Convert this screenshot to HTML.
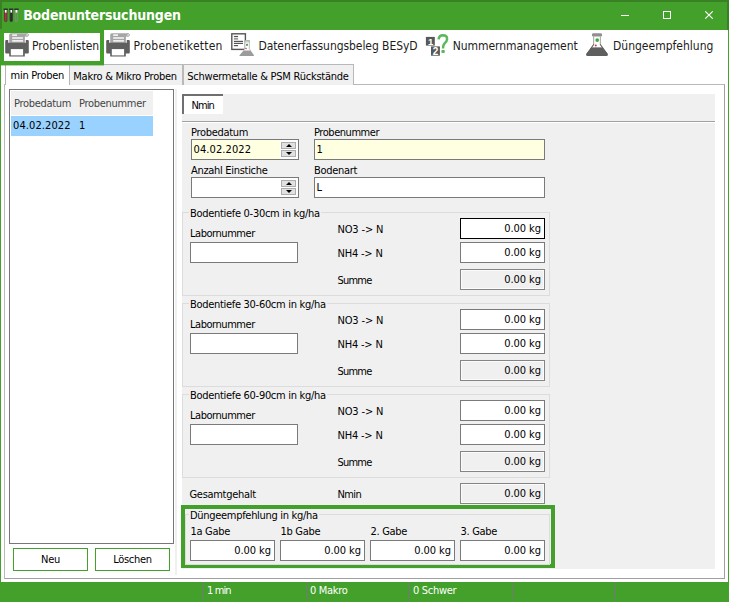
<!DOCTYPE html>
<html lang="de">
<head>
<meta charset="utf-8">
<title>Bodenuntersuchungen</title>
<style>
:root{--g:#43a02a;--gd:#3a8024;--f:"DejaVu Sans Condensed","Liberation Sans",sans-serif;}
*{box-sizing:border-box;margin:0;padding:0}
html,body{width:729px;height:602px;overflow:hidden;background:#fff}
body{position:relative;font-family:var(--f);font-size:11px;letter-spacing:-0.3px;color:#000;line-height:13px}
#win{position:absolute;left:0;top:0;width:729px;height:602px;background:#fff;overflow:hidden}
#win div,#win span,#win svg{position:absolute;white-space:nowrap}
/* title bar */
#title{left:0;top:0;width:729px;height:30px;background:var(--g);border:2px solid var(--gd);border-bottom:none}
#title .cap{left:21.2px;top:4px;font-size:14px;font-weight:bold;color:#fff;line-height:18px;letter-spacing:-0.17px}
/* window frame */
#bl{left:0;top:30px;width:1px;height:572px;background:var(--g)}
#br{left:728px;top:30px;width:1px;height:572px;background:var(--g)}
#status{left:0;top:582px;width:729px;height:20px;background:var(--g);color:#fff}
#status span{top:2px;color:#fff}
#status i{position:absolute;top:0;width:1px;height:18px;background:#767a74}
/* toolbar */
.tb{top:39px;font-size:12px;line-height:15px;letter-spacing:-0.12px;color:#1c1c1c}
#hl{left:0;top:29px;width:104px;height:36px;border:4px solid var(--g);background:#fff;z-index:3;box-shadow:0 1px 0 rgba(67,160,42,.4)}
.ic,.tb{z-index:4}
/* tabs */
.tab{top:64px;height:21px;border:1px solid #b9b9b9;border-bottom:none;background:#f0f0f0}
.tab span{top:5px;left:3.3px;letter-spacing:-0.25px}
.tab.act{top:65px;height:20px;background:#fff;border-color:#b4b4b4;border-top:none}
.tab.act span{top:4px;left:4.5px}
#panel{left:4px;top:84px;width:721px;height:495px;border:1px solid #b9b9b9;border-right:1px solid #a0a0a0;border-bottom:1px solid #a0a0a0;background:#fff}
#split{left:175px;top:89px;width:2px;height:486px;background:#f0f0f0}
/* list */
#list{left:9px;top:89px;width:165px;height:455px;border:1px solid #777;background:#fff}
#lhead{left:11px;top:91px;width:142px;height:24px;background:#f0f0f0}
#lsel{left:11px;top:116px;width:142px;height:20px;background:#99d1ff}
.btn{top:548px;height:23px;border:1px solid var(--g);background:#fff;text-align:center;line-height:21px}
/* form */
#gray{left:182px;top:94px;width:533px;height:475px;background:#f0f0f0}
#ntab{left:182px;top:94px;width:41px;height:20px;background:#fff;border-left:2px solid #6f6f6f;border-top:2px solid #6f6f6f}
#ntab span{left:7.5px;top:3px;letter-spacing:-0.95px}
#nline{left:182px;top:121px;width:533px;height:2px;background:#fff;border-top:1px solid #a0a0a0}
.t{line-height:13px}
.inp{border:1px solid #7a7a7a;background:#fff;line-height:13px;padding:3px 0 0 1.5px}
.inp.y{background:#ffffe1}
.inp.r{text-align:right;padding-right:3px;letter-spacing:-0.05px}
.inp.d{background:#f0f0f0;border-color:#858585;box-shadow:inset 0 0 0 1px #fbfbfb}
.inp.f{border-color:#000}
.spw{width:18px;height:19px;background:#fff}
.spb{width:15px;height:7px;background:#e1e1e1;border:1px solid #adadad}
.grp{border:1px solid #dcdcdc}
.gl{background:#f0f0f0;padding:0 1px}
#hl2{left:181px;top:505px;width:374px;height:63px;border:4px solid var(--g)}
</style>
</head>
<body>
<div id="win">
  <div id="title"><span class="cap">Bodenuntersuchungen</span></div>
  <div id="panel"></div>
  <div id="hl"></div>
  <svg class="ic" style="left:1px;top:8px" width="20" height="16" viewBox="0 0 20 16">
    <path d="M3.5 1.6H6V12.4Q6 13.6 4.75 13.6Q3.5 13.6 3.5 12.4Z" fill="#c8283c" stroke="#3c3c3c" stroke-width="0.8"/>
    <rect x="3.9" y="2" width="1.7" height="2.6" fill="#fff"/>
    <rect x="2.6" y="0.5" width="4.2" height="1.5" fill="#2e2e2e"/>
    <path d="M9 1.6H11.5V12.4Q11.5 13.6 10.25 13.6Q9 13.6 9 12.4Z" fill="#2b2b2b" stroke="#3c3c3c" stroke-width="0.8"/>
    <rect x="9.4" y="2" width="1.7" height="2.6" fill="#fff"/>
    <rect x="8.1" y="0.5" width="4.2" height="1.5" fill="#2e2e2e"/>
    <path d="M14.2 1.6H16.7V12.4Q16.7 13.6 15.45 13.6Q14.2 13.6 14.2 12.4Z" fill="#4aa338" stroke="#8a8f86" stroke-width="0.8"/>
    <rect x="14.6" y="2" width="1.7" height="2.6" fill="#fff"/>
    <rect x="13.3" y="0.5" width="4.4" height="1.5" fill="#2e2e2e"/>
  </svg>
  <svg class="ic" style="left:618px;top:8px" width="100" height="14" viewBox="0 0 100 14">
    <rect x="3" y="7" width="8" height="1" fill="#fff"/>
    <rect x="45.5" y="3.5" width="7" height="7" fill="none" stroke="#fff" stroke-width="1"/>
    <path d="M87.3 3.3L94.7 10.7M94.7 3.3L87.3 10.7" stroke="#fff" stroke-width="1.2" fill="none"/>
  </svg>
  <svg class="ic" style="left:4.5px;top:33.2px" width="24" height="24" viewBox="0 0 24 24">
    <path d="M4.2 9.8V1.6Q4.2 .2 5.6 .2H22" fill="none"/>
    <path d="M4.2 10V1.8Q4.2 .2 5.8 .2H22.2V3.6H19.9V10Z" fill="#a6a6a6"/>
    <circle cx="22.1" cy="2" r="1.3" fill="#fff" stroke="#a6a6a6" stroke-width="1"/>
    <rect x="7.2" y="1.4" width="4.8" height="1.4" fill="#fff"/>
    <rect x="7.2" y="4.3" width="10.8" height="1.4" fill="#fff"/>
    <rect x="7.2" y="7.2" width="10.8" height="1.4" fill="#fff"/>
    <path d="M1.2 7H3.2V9.8H20.8V7H22.8Q23.8 7 23.8 8V19.4Q23.8 20.4 22.8 20.4H19.8V23.6H4.2V20.4H1.2Q.2 20.4 .2 19.4V8Q.2 7 1.2 7Z" fill="#5f5f5f"/>
    <rect x="5.8" y="16.1" width="12.3" height="6.3" fill="#fff"/>
  </svg>
  <svg class="ic" style="left:106px;top:33.2px" width="24" height="24" viewBox="0 0 24 24">
    <path d="M4.2 9.8V1.6Q4.2 .2 5.6 .2H22" fill="none"/>
    <path d="M4.2 10V1.8Q4.2 .2 5.8 .2H22.2V3.6H19.9V10Z" fill="#a6a6a6"/>
    <circle cx="22.1" cy="2" r="1.3" fill="#fff" stroke="#a6a6a6" stroke-width="1"/>
    <rect x="7.2" y="1.4" width="4.8" height="1.4" fill="#fff"/>
    <rect x="7.2" y="4.3" width="10.8" height="1.4" fill="#fff"/>
    <rect x="7.2" y="7.2" width="10.8" height="1.4" fill="#fff"/>
    <path d="M1.2 7H3.2V9.8H20.8V7H22.8Q23.8 7 23.8 8V19.4Q23.8 20.4 22.8 20.4H19.8V23.6H4.2V20.4H1.2Q.2 20.4 .2 19.4V8Q.2 7 1.2 7Z" fill="#5f5f5f"/>
    <rect x="5.8" y="16.1" width="12.3" height="6.3" fill="#fff"/>
  </svg>
  <svg class="ic" style="left:230px;top:32px" width="26" height="26" viewBox="0 0 26 26">
    <rect x="1.8" y="1.8" width="13.6" height="15.6" fill="#fff" stroke="#555" stroke-width="1.4"/>
    <rect x="3.9" y="3.9" width="4.2" height="1.2" fill="#555"/>
    <rect x="3.9" y="5.9" width="4.2" height="1.8" fill="#9a9a9a"/>
    <rect x="3.9" y="8.8" width="9.1" height="1.2" fill="#555"/>
    <rect x="3.9" y="10.8" width="9.1" height="1.2" fill="#555"/>
    <rect x="3.9" y="13" width="4.2" height="1.2" fill="#555"/>
    <path d="M14.9 9.3V16.6L9.6 23.2Q9.2 24 10.2 24H23.2Q24.2 24 23.8 23.2L19.3 16.6V9.3Z" fill="#fff"/>
    <path d="M14.9 9.3V16.8L13.4 18.6" fill="none" stroke="#b5b5b5" stroke-width="0.9"/>
    <path d="M19.3 9.3V16.8L20.6 18.6" fill="none" stroke="#b5b5b5" stroke-width="0.9"/>
    <rect x="14.5" y="8.1" width="5.2" height="2.2" fill="#a9a9a9"/>
    <rect x="15.4" y="8.9" width="3.4" height="0.7" fill="#e6e6e6"/>
    <path d="M13.6 18.4H20.6L24 23.2Q24.4 24 23.4 24H10Q9 24 9.5 23.2Z" fill="#9b9b9b"/>
    <rect x="16" y="11.8" width="2" height="2" fill="#4cae4c"/>
    <rect x="15.3" y="15.9" width="1.4" height="1.2" fill="#e0344c"/>
  </svg>
  <svg class="ic" style="left:424px;top:32px" width="26" height="26" viewBox="0 0 26 26">
    <rect x="1.9" y="4.9" width="8.9" height="8.7" fill="#585858"/>
    <rect x="7" y="14.4" width="8.9" height="9.3" fill="#585858"/>
    <text x="6.6" y="12.6" style="font-family:'Liberation Sans',sans-serif" font-weight="bold" font-size="9.5" fill="#fff" text-anchor="middle" letter-spacing="0">1</text>
    <text x="11.5" y="23" style="font-family:'Liberation Sans',sans-serif" font-weight="bold" font-size="10" fill="#fff" text-anchor="middle" letter-spacing="0">2</text>
    <path d="M14.6 7.4Q15 3.3 19 3.3Q23.2 3.4 23.1 7Q23 9.3 20.6 11.4Q19 13 19 16.4" fill="none" stroke="#5cb85c" stroke-width="2.5" stroke-linecap="butt"/>
    <rect x="17.4" y="18.1" width="3.4" height="3" rx="0.8" fill="#5cb85c"/>
  </svg>
  <svg class="ic" style="left:584px;top:32px" width="26" height="26" viewBox="0 0 26 26">
    <path d="M9.6 4.5V12L2.6 21.6Q1.6 24 3.8 24H22.2Q24.4 24 23.4 21.6L16.4 12V4.5Z" fill="#fff"/>
    <path d="M9.6 4.5V12.4" stroke="#b0b0b0" stroke-width="1.2" fill="none"/>
    <path d="M16.4 4.5V12.4" stroke="#b0b0b0" stroke-width="1.2" fill="none"/>
    <path d="M9.4 12L2.6 21.6Q1.6 24 3.8 24H22.2Q24.4 24 23.4 21.6L16.6 12L15.6 12.5L18.1 15.8H7.9L10.4 12.5Z" fill="#5f5f5f"/>
    <path d="M7.5 15.6H18.5L23.4 21.6Q24.4 24 22.2 24H3.8Q1.6 24 2.6 21.6Z" fill="#5f5f5f"/>
    <rect x="8" y="1.2" width="10" height="3.4" rx="1.3" fill="#8f8f8f"/>
    <circle cx="13.2" cy="8.1" r="1.9" fill="#45a845"/>
    <circle cx="11.8" cy="13.4" r="1" fill="#dc3248"/>
  </svg>
  <span class="tb" style="left:32px;letter-spacing:0.04px">Probenlisten</span>
  <span class="tb" style="left:133.6px;letter-spacing:0.22px">Probenetiketten</span>
  <span class="tb" style="left:258.4px;letter-spacing:-0.06px">Datenerfassungsbeleg BESyD</span>
  <span class="tb" style="left:452.8px;letter-spacing:-0.07px">Nummernmanagement</span>
  <span class="tb" style="left:613px;letter-spacing:0px">Düngeempfehlung</span>

  <div class="tab" style="left:69px;width:114px"><span>Makro &amp; Mikro Proben</span></div>
  <div class="tab" style="left:183px;width:171px"><span>Schwermetalle &amp; PSM Rückstände</span></div>
  <div class="tab act" style="left:5px;width:65px"><span>min Proben</span></div>

  <div id="split"></div>
  <div id="list"></div>
  <div id="lhead"></div>
  <div id="lsel"></div>
  <span style="left:14px;top:97px;color:#444">Probedatum</span>
  <span style="left:79px;top:97px;color:#444">Probenummer</span>
  <span style="left:13px;top:119px;letter-spacing:0.1px">04.02.2022</span>
  <span style="left:79px;top:119px">1</span>
  <div class="btn" style="left:13px;width:75px">Neu</div>
  <div class="btn" style="left:95px;width:75px">Löschen</div>

  <div id="gray"></div>
  <div id="ntab"><span>Nmin</span></div>
  <div id="nline"></div>
  <span class="t" style="left:191px;top:126px;">Probedatum</span>
  <span class="t" style="left:314px;top:126px;letter-spacing:-0.45px;">Probenummer</span>
  <div class="inp y" style="left:191px;top:139px;width:108px;height:21px;letter-spacing:0.1px;">04.02.2022</div>
  <div class="spw" style="left:280px;top:140px"></div>
  <div class="spb" style="left:281px;top:142px"><svg width="6" height="3" viewBox="0 0 6 3" style="left:3.5px;top:1px"><path d="M0 3 L3 0 L6 3 Z" fill="#000"/></svg></div>
  <div class="spb" style="left:281px;top:150px"><svg width="6" height="3" viewBox="0 0 6 3" style="left:3.5px;top:1px"><path d="M0 0 L6 0 L3 3 Z" fill="#000"/></svg></div>
  <div class="inp y" style="left:314px;top:139px;width:231px;height:21px;">1</div>
  <span class="t" style="left:191px;top:164px;">Anzahl Einstiche</span>
  <span class="t" style="left:314px;top:164px;">Bodenart</span>
  <div class="inp " style="left:191px;top:177px;width:108px;height:21px;"></div>
  <div class="spw" style="left:280px;top:178px"></div>
  <div class="spb" style="left:281px;top:180px"><svg width="6" height="3" viewBox="0 0 6 3" style="left:3.5px;top:1px"><path d="M0 3 L3 0 L6 3 Z" fill="#000"/></svg></div>
  <div class="spb" style="left:281px;top:188px"><svg width="6" height="3" viewBox="0 0 6 3" style="left:3.5px;top:1px"><path d="M0 0 L6 0 L3 3 Z" fill="#000"/></svg></div>
  <div class="inp " style="left:314px;top:177px;width:231px;height:21px;">L</div>
  <div class="grp" style="left:182px;top:212px;width:368px;height:84px"></div>
  <span class="t gl" style="left:189px;top:207px">Bodentiefe 0-30cm in kg/ha</span>
  <span class="t" style="left:190px;top:227px;letter-spacing:-0.45px;">Labornummer</span>
  <div class="inp " style="left:190px;top:242px;width:108px;height:21px;"></div>
  <span class="t" style="left:337.5px;top:223px;letter-spacing:-0.16px;">NO3 -&gt; N</span>
  <span class="t" style="left:337.5px;top:247px;letter-spacing:-0.2px;">NH4 -&gt; N</span>
  <span class="t" style="left:337.5px;top:274px;letter-spacing:-0.78px;">Summe</span>
  <div class="inp r f" style="left:460px;top:218px;width:85px;height:21px;">0.00 kg</div>
  <div class="inp r" style="left:460px;top:242px;width:85px;height:21px;">0.00 kg</div>
  <div class="inp r d" style="left:460px;top:269px;width:85px;height:21px;">0.00 kg</div>
  <div class="grp" style="left:182px;top:303px;width:368px;height:84px"></div>
  <span class="t gl" style="left:189px;top:298px">Bodentiefe 30-60cm in kg/ha</span>
  <span class="t" style="left:190px;top:318px;letter-spacing:-0.45px;">Labornummer</span>
  <div class="inp " style="left:190px;top:333px;width:108px;height:21px;"></div>
  <span class="t" style="left:337.5px;top:314px;letter-spacing:-0.16px;">NO3 -&gt; N</span>
  <span class="t" style="left:337.5px;top:338px;letter-spacing:-0.2px;">NH4 -&gt; N</span>
  <span class="t" style="left:337.5px;top:365px;letter-spacing:-0.78px;">Summe</span>
  <div class="inp r" style="left:460px;top:309px;width:85px;height:21px;">0.00 kg</div>
  <div class="inp r" style="left:460px;top:333px;width:85px;height:21px;">0.00 kg</div>
  <div class="inp r d" style="left:460px;top:360px;width:85px;height:21px;">0.00 kg</div>
  <div class="grp" style="left:182px;top:394px;width:368px;height:84px"></div>
  <span class="t gl" style="left:189px;top:389px">Bodentiefe 60-90cm in kg/ha</span>
  <span class="t" style="left:190px;top:409px;letter-spacing:-0.45px;">Labornummer</span>
  <div class="inp " style="left:190px;top:424px;width:108px;height:21px;"></div>
  <span class="t" style="left:337.5px;top:405px;letter-spacing:-0.16px;">NO3 -&gt; N</span>
  <span class="t" style="left:337.5px;top:429px;letter-spacing:-0.2px;">NH4 -&gt; N</span>
  <span class="t" style="left:337.5px;top:456px;letter-spacing:-0.78px;">Summe</span>
  <div class="inp r" style="left:460px;top:400px;width:85px;height:21px;">0.00 kg</div>
  <div class="inp r" style="left:460px;top:424px;width:85px;height:21px;">0.00 kg</div>
  <div class="inp r d" style="left:460px;top:451px;width:85px;height:21px;">0.00 kg</div>
  <span class="t" style="left:189.5px;top:488px;">Gesamtgehalt</span>
  <span class="t" style="left:337.5px;top:488px;letter-spacing:-0.6px;">Nmin</span>
  <div class="inp r d" style="left:460px;top:483px;width:85px;height:21px;">0.00 kg</div>
  <div id="hl2"></div>
  <div class="grp" style="left:185px;top:514px;width:365px;height:51px"></div>
  <span class="t gl" style="left:189px;top:509px">Düngeempfehlung in kg/ha</span>
  <span class="t" style="left:190.5px;top:525px;">1a Gabe</span>
  <div class="inp r" style="left:190px;top:540px;width:85px;height:21px;">0.00 kg</div>
  <span class="t" style="left:280.5px;top:525px;">1b Gabe</span>
  <div class="inp r" style="left:280px;top:540px;width:85px;height:21px;">0.00 kg</div>
  <span class="t" style="left:370.5px;top:525px;">2. Gabe</span>
  <div class="inp r" style="left:370px;top:540px;width:85px;height:21px;">0.00 kg</div>
  <span class="t" style="left:460.5px;top:525px;">3. Gabe</span>
  <div class="inp r" style="left:460px;top:540px;width:85px;height:21px;">0.00 kg</div>

  <div id="status">
    <i style="left:203px"></i><i style="left:306px"></i><i style="left:409px"></i><i style="left:512px"></i><i style="left:615px"></i>
    <span style="left:207px;letter-spacing:-0.9px">1 min</span>
    <span style="left:310px">0 Makro</span>
    <span style="left:413px">0 Schwer</span>
  </div>
  <div id="bl"></div><div id="br"></div>
</div>
</body>
</html>
